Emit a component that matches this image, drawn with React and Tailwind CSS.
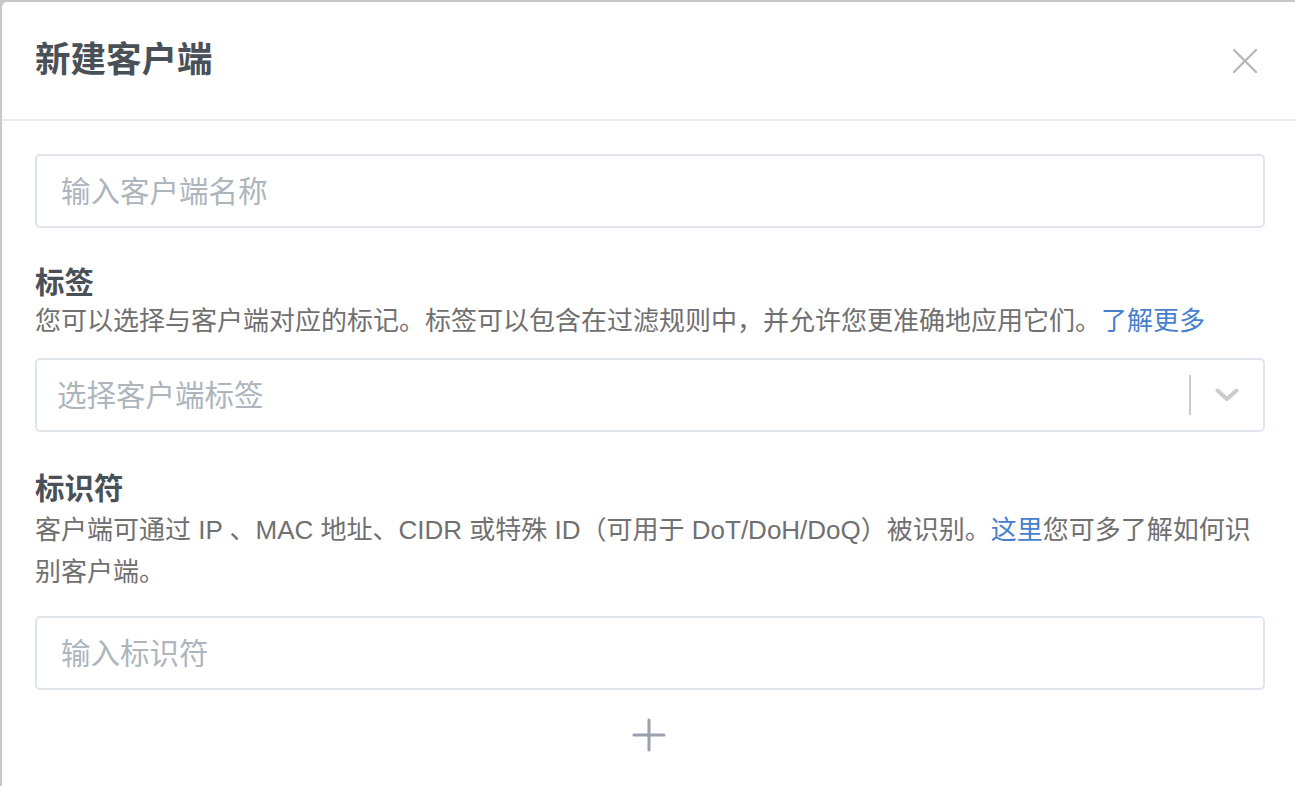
// App.jsx

const font = {
  fontFamily:
    '"Liberation Sans", "Noto Sans CJK SC", sans-serif',
};

const App = () => {
  return (
    <div
      className="h-screen w-full overflow-hidden bg-[#c8c8c8] pl-[2px] pt-[2px]"
      style={font}
    >
      <div className="w-[1296px] min-h-[800px] bg-white rounded-[5px]">

        {/* HEADER */}
        <div className="h-[119px] flex items-center justify-between pl-[33px] pr-[40px] border-b-2 border-[#e9ecef]">
          <h2 className="text-[35.5px] font-semibold text-[#495057]">
            新建客户端
          </h2>

          <button className="w-[26px] h-[26px] flex items-center justify-center text-[#b8b8b8]">
            <svg width="26" height="26" viewBox="0 0 26 26">
              <path
                d="M2 2 L24 24 M24 2 L2 24"
                stroke="currentColor"
                strokeWidth="2.4"
                strokeLinecap="round"
              />
            </svg>
          </button>
        </div>

        {/* BODY */}
        <div className="px-[33px] pt-[33px]">

          {/* NAME */}
          <div className="h-[74px] border-2 border-[#e0e5ec] rounded-[5px] flex items-center pl-[24px] pt-[3px]">
            <span className="text-[29.5px] text-[#adb5bd]">
              输入客户端名称
            </span>
          </div>

          {/* TAGS */}
          <div className="mt-[37px] text-[29.5px] font-bold text-[#495057] leading-[36px]">
            标签
          </div>

          <p className="text-[26px] leading-[40px] text-[#707070]">
            您可以选择与客户端对应的标记。标签可以包含在过滤规则中，并允许您更准确地应用它们。
            <span className="text-[#467fcf]">了解更多</span>
          </p>

          <div className="mt-[17px] h-[74px] border-2 border-[#e0e5ec] rounded-[5px] flex items-center pl-[20px]">
            <span className="flex-1 text-[29.5px] text-[#adb5bd] pt-[3px]">
              选择客户端标签
            </span>

            <div className="w-[2px] h-[40px] bg-[#cccccc]" />

            <div className="w-[72px] flex items-center justify-center">
              <svg width="24" height="14" viewBox="0 0 24 14">
                <path
                  d="M2.5 2.5 L12 11 L21.5 2.5"
                  fill="none"
                  stroke="#cccccc"
                  strokeWidth="4"
                  strokeLinecap="round"
                  strokeLinejoin="round"
                />
              </svg>
            </div>
          </div>

          {/* IDENTIFIERS */}
          <div className="mt-[39px] text-[29.5px] font-bold text-[#495057] leading-[36px]">
            标识符
          </div>

          <p className="text-[26px] leading-[42px] text-[#707070] pt-[2px]">
            客户端可通过 IP 、MAC 地址、CIDR 或特殊 ID（可用于 DoT/DoH/DoQ）被识别。
            <span className="text-[#467fcf]">这里</span>
            您可多了解如何识别客户端。
          </p>

          <div className="mt-[23px] h-[74px] border-2 border-[#e0e5ec] rounded-[5px] flex items-center pl-[24px] pt-[3px]">
            <span className="text-[29.5px] text-[#adb5bd]">
              输入标识符
            </span>
          </div>

          {/* ADD */}
          <div className="mt-[28px] flex justify-center pr-[2px]">
            <svg width="34" height="34" viewBox="0 0 34 34">
              <path
                d="M17 2 V32 M2 17 H32"
                stroke="#9aa0ac"
                strokeWidth="3"
                strokeLinecap="round"
              />
            </svg>
          </div>

        </div>
      </div>
    </div>
  );
};

export default App;
